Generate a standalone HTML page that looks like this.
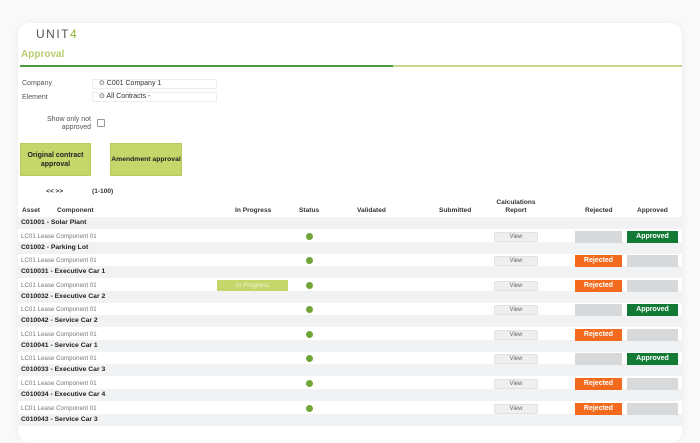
<!DOCTYPE html>
<html><head><meta charset="utf-8"><style>
*{margin:0;padding:0;box-sizing:border-box}
body{width:700px;height:425px;background:#f9f9f9;font-family:"Liberation Sans",Arial,sans-serif;position:relative;overflow:hidden}
.card{position:absolute;left:18px;top:23px;width:664px;height:420px;background:#fff;border-radius:12px;box-shadow:0 0 8px rgba(0,0,0,.06)}
.a{position:absolute;white-space:nowrap}
.lbl{font-size:7px;color:#555}
.inp{position:absolute;height:10px;border:1px solid #eee;font-size:7px;color:#333;padding-left:6px;line-height:8px}
.gbtn{position:absolute;background:#c5d76a;border:1px solid #b8ca5a;font-size:7px;font-weight:bold;color:#222;text-align:center;display:flex;align-items:center;justify-content:center;line-height:9px;white-space:nowrap}
.th{font-size:6.6px;font-weight:bold;color:#333}
.band{position:absolute;left:18px;width:664px;height:12px;background:#f0f2f3}
.gh{font-size:6.8px;font-weight:bold;color:#222}
.comp{font-size:6.2px;color:#777}
.dot{position:absolute;width:7px;height:7px;border-radius:50%;background:#6fa536;left:306px}
.view{position:absolute;left:494px;width:44px;height:10px;background:#efefef;border:1px solid #e2e2e2;border-radius:2px;font-size:6px;color:#666;text-align:center;line-height:8px}
.rej{position:absolute;left:575px;width:47px;height:12px;background:#d8d9db}
.rej.on{background:#f36a1d;color:#fff;font-size:7px;font-weight:bold;text-align:center;line-height:12px}
.app{position:absolute;left:627px;width:51px;height:12px;background:#d8d9db}
.app.on{background:#137a36;color:#fff;font-size:7px;font-weight:bold;text-align:center;line-height:12px}
</style></head><body>
<div class="card"></div>
<div class="a" style="left:36px;top:27px;font-size:12px;letter-spacing:1.5px;color:#555">UNIT<span style="color:#8db82f">4</span></div>
<div class="a" style="left:21px;top:49px;font-size:10px;font-weight:bold;color:#b7cc6e">Approval</div>
<div class="a" style="left:20px;top:65px;width:373px;height:2px;background:#4a9a3f"></div>
<div class="a" style="left:393px;top:65px;width:289px;height:2px;background:#c7d98b"></div>
<div class="a lbl" style="left:22px;top:80px">Company</div>
<div class="a lbl" style="left:22px;top:94px">Element</div>
<div class="inp" style="left:92px;top:79px;width:125px">⊙ C001 Company 1</div>
<div class="inp" style="left:92px;top:92px;width:125px">⊙ All Contracts -</div>
<div class="a lbl" style="left:40px;top:116px;text-align:right;width:51px;white-space:normal;line-height:8px">Show only not approved</div>
<div class="a" style="left:97px;top:119px;width:8px;height:8px;border:1px solid #999;border-radius:1px"></div>
<div class="gbtn" style="left:20px;top:143px;width:71px;height:33px">Original contract<br>approval</div>
<div class="gbtn" style="left:110px;top:143px;width:72px;height:33px;font-size:6.8px">Amendment approval</div>
<div class="a th" style="left:46px;top:188px">&lt;&lt; &gt;&gt;</div>
<div class="a th" style="left:92px;top:188px">(1-100)</div>
<div class="a th" style="left:22px;top:207px">Asset</div>
<div class="a th" style="left:57px;top:207px">Component</div>
<div class="a th" style="left:235px;top:207px">In Progress</div>
<div class="a th" style="left:299px;top:207px">Status</div>
<div class="a th" style="left:357px;top:207px">Validated</div>
<div class="a th" style="left:439px;top:207px">Submitted</div>
<div class="a th" style="left:493px;top:199px;text-align:center;width:46px;line-height:8px;white-space:normal">Calculations Report</div>
<div class="a th" style="left:585px;top:207px">Rejected</div>
<div class="a th" style="left:637px;top:207px">Approved</div>

<div class="band" style="top:217px"></div><div class="a gh" style="left:21px;top:219px">C01001 - Solar Plant</div>
<div class="band" style="top:242px"></div><div class="a gh" style="left:21px;top:244px">C01002 - Parking Lot</div>
<div class="band" style="top:266px"></div><div class="a gh" style="left:21px;top:268px">C010031 - Executive Car 1</div>
<div class="band" style="top:291px"></div><div class="a gh" style="left:21px;top:293px">C010032 - Executive Car 2</div>
<div class="band" style="top:315px"></div><div class="a gh" style="left:21px;top:317px">C010042 - Service Car 2</div>
<div class="band" style="top:340px"></div><div class="a gh" style="left:21px;top:342px">C010041 - Service Car 1</div>
<div class="band" style="top:364px"></div><div class="a gh" style="left:21px;top:366px">C010033 - Executive Car 3</div>
<div class="band" style="top:389px"></div><div class="a gh" style="left:21px;top:391px">C010034 - Executive Car 4</div>
<div class="band" style="top:414px"></div><div class="a gh" style="left:21px;top:416px">C010043 - Service Car 3</div>

<div class="a comp" style="left:21px;top:233px">LC01 Lease Component 01</div><div class="dot" style="top:233px"></div><div class="view" style="top:232px">View</div><div class="rej" style="top:231px"></div><div class="app on" style="top:231px">Approved</div>
<div class="a comp" style="left:21px;top:257px">LC01 Lease Component 01</div><div class="dot" style="top:257px"></div><div class="view" style="top:256px">View</div><div class="rej on" style="top:255px">Rejected</div><div class="app" style="top:255px"></div>
<div class="a comp" style="left:21px;top:282px">LC01 Lease Component 01</div><div class="a" style="left:217px;top:280px;width:71px;height:11px;background:#c5d76a;color:#eef3d0;font-size:6.5px;text-align:center;line-height:11px">In Progress</div><div class="dot" style="top:282px"></div><div class="view" style="top:281px">View</div><div class="rej on" style="top:280px">Rejected</div><div class="app" style="top:280px"></div>
<div class="a comp" style="left:21px;top:306px">LC01 Lease Component 01</div><div class="dot" style="top:306px"></div><div class="view" style="top:305px">View</div><div class="rej" style="top:304px"></div><div class="app on" style="top:304px">Approved</div>
<div class="a comp" style="left:21px;top:331px">LC01 Lease Component 01</div><div class="dot" style="top:331px"></div><div class="view" style="top:330px">View</div><div class="rej on" style="top:329px">Rejected</div><div class="app" style="top:329px"></div>
<div class="a comp" style="left:21px;top:355px">LC01 Lease Component 01</div><div class="dot" style="top:355px"></div><div class="view" style="top:354px">View</div><div class="rej" style="top:353px"></div><div class="app on" style="top:353px">Approved</div>
<div class="a comp" style="left:21px;top:380px">LC01 Lease Component 01</div><div class="dot" style="top:380px"></div><div class="view" style="top:379px">View</div><div class="rej on" style="top:378px">Rejected</div><div class="app" style="top:378px"></div>
<div class="a comp" style="left:21px;top:405px">LC01 Lease Component 01</div><div class="dot" style="top:405px"></div><div class="view" style="top:404px">View</div><div class="rej on" style="top:403px">Rejected</div><div class="app" style="top:403px"></div>
</body></html>
